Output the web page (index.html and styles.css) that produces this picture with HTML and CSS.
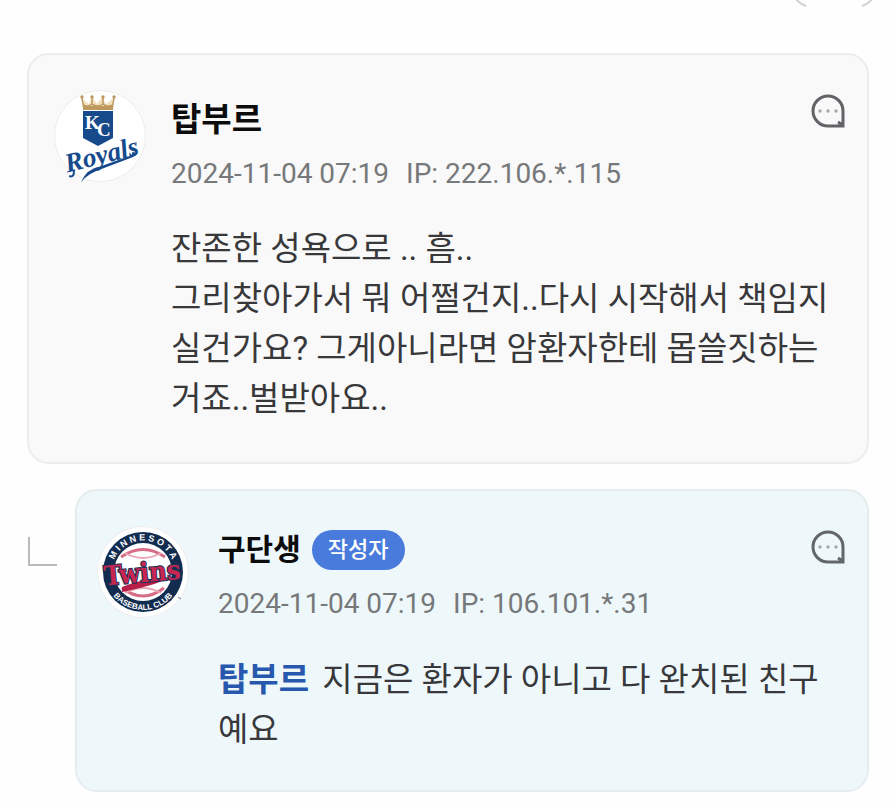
FILE: index.html
```html
<!DOCTYPE html>
<html lang="ko">
<head>
<meta charset="utf-8">
<meta name="viewport" content="width=device-width, initial-scale=1">
<title>댓글</title>
<link rel="stylesheet" href="styles.css">
</head>
<body>
<div class="topbar">
  <svg class="topbar-mark" width="82" height="8" viewBox="0 0 82 8" aria-hidden="true">
    <path d="M3-1Q7 4 13 6M69 6Q75 4 79-1" fill="none" stroke="#d2d2d2" stroke-width="2"/>
  </svg>
</div>
<main class="comments">
  <article class="comment">
    <svg class="avatar" viewBox="0 0 92 92" role="img" aria-label="Kansas City Royals">
      <circle cx="46" cy="46" r="45.5" fill="#fff" stroke="#ececec"/>
      <path d="M30 19 27 8 35 14 38 7 43 14 48 7 52 14 60 8 58 19Z" fill="#f1dfbd"/>
      <path d="M30 20 28 8M58 20 60 8M38 15V8M49 15V8M29 15Q34 18 38 14Q43 18 49 14Q54 18 59 15" fill="none" stroke="#bd985f" stroke-width="1.5"/>
      <path d="M29 16H59V20H29Z" fill="#bd985f"/>
      <g fill="#bd985f"><circle cx="28" cy="7" r="1.7"/><circle cx="38" cy="7" r="1.7"/><circle cx="49" cy="7" r="1.7"/><circle cx="60" cy="7" r="1.7"/></g>
      <path d="M29 21H59V48L44 56 29 48Z" fill="#174a8b"/>
      <text class="kc" x="31 43" y="39 46">KC</text>
      <g transform="rotate(-14 46 65)">
        <text class="royals" x="10" y="74">Royals</text>
        <path d="M78 70Q86 73 77 75L44 79Q29 80 21 87Q29 75 44 76L77 73" fill="#174a8b"/>
        <path d="M17 73Q16 81 11 78" fill="none" stroke="#174a8b" stroke-width="2"/>
      </g>
      <circle cx="82" cy="53" r="1" fill="#889bb2"/>
    </svg>
    <header class="info">
      <div class="name-row"><h2 class="name">탑부르</h2></div>
      <p class="meta"><time datetime="2024-11-04T07:19">2024-11-04 07:19</time><span>IP: 222.106.*.115</span></p>
    </header>
    <button class="reply-button" type="button" aria-label="답글">
      <svg width="34" height="34" viewBox="0 0 34 34" aria-hidden="true">
        <path d="M32 17A15 15 0 1 0 17 32H32V17M32 31 27 28" fill="none" stroke="#626366" stroke-width="3"/>
        <g fill="#a8a8a8"><circle cx="9" cy="17" r="1.7"/><circle cx="17" cy="17" r="1.7"/><circle cx="25" cy="17" r="1.7"/></g>
      </svg>
    </button>
    <p class="text">잔존한 성욕으로 .. 흠..<br>그리찾아가서 뭐 어쩔건지..다시 시작해서 책임지실건가요? 그게아니라면 암환자한테 몹쓸짓하는거죠..벌받아요..</p>
  </article>

  <div class="thread">
    <span class="branch"></span>
    <article class="comment reply">
      <svg class="avatar" viewBox="0 0 92 92" role="img" aria-label="Minnesota Twins">
        <defs>
          <path id="ring-top" d="M14.500 46A31.500 31.500 0 0 1 77.500 46"/>
          <path id="ring-bottom" d="M8 46A38 38 0 0 0 84 46"/>
          <clipPath id="ball"><circle cx="46" cy="46" r="28"/></clipPath>
        </defs>
        <circle cx="46" cy="46" r="45.5" fill="#fff" stroke="#eeecec"/>
        <circle cx="46" cy="46" r="40" fill="#122c50"/>
        <circle cx="46" cy="46" r="29" fill="#fff"/>
        <g clip-path="url(#ball)" fill="none" stroke="#d66c85" stroke-width="3">
          <path d="M24 31Q46 16 68 31M25 62Q46 78 67 62"/>
          <path d="M28 27Q46 37 64 27M28 67Q46 57 64 67" stroke="#e7a8b6" stroke-width="2"/>
        </g>
        <text class="ring"><textPath href="#ring-top" startOffset="50%">M I N N E S O T A</textPath></text>
        <text class="ring small"><textPath href="#ring-bottom" startOffset="50%">BASEBALL CLUB</textPath></text>
        <path d="M25 61Q46 52 68 52Q68 57 25 66Z" fill="#b71e48"/>
        <text class="twins" x="45" y="56" transform="rotate(-5 46 46)">Twins</text>
        <path d="M81 71 84 73" stroke="#788188"/>
      </svg>
      <header class="info">
        <div class="name-row"><h2 class="name">구단생</h2><span class="badge">작성자</span></div>
        <p class="meta"><time datetime="2024-11-04T07:19">2024-11-04 07:19</time><span>IP: 106.101.*.31</span></p>
      </header>
      <button class="reply-button" type="button" aria-label="답글">
        <svg width="34" height="34" viewBox="0 0 34 34" aria-hidden="true">
          <path d="M32 17A15 15 0 1 0 17 32H32V17M32 31 27 28" fill="none" stroke="#626669" stroke-width="3"/>
          <g fill="#a8a8a8"><circle cx="9" cy="17" r="1.7"/><circle cx="17" cy="17" r="1.7"/><circle cx="25" cy="17" r="1.7"/></g>
        </svg>
      </button>
      <p class="text"><a class="mention" href="#">탑부르</a> 지금은 환자가 아니고 다 완치된 친구예요</p>
    </article>
  </div>
</main>
</body>
</html>
```
FILE: styles.css
```css
* { box-sizing: border-box; }

body {
  margin: 0;
  background: #fefefe;
  color: #38383b;
  font-family: Roboto, "Noto Sans CJK KR", sans-serif;
}

h2, p { margin: 0; }

.topbar {
  display: flex;
  justify-content: flex-end;
  height: 53px;
  padding-right: 19px;
}

.topbar-mark { display: block; }

.comments {
  display: flex;
  flex-direction: column;
  gap: 25px;
  padding: 0 25px 12px 27px;
}

.comment {
  display: grid;
  grid-template-columns: 92px 1fr 34px;
  align-items: start;
  column-gap: 25px;
  row-gap: 32px;
  padding: 35px 22px 38px 25px;
  border: 2px solid #ececec;
  border-radius: 22px;
  background: #f9f9f9;
}

.avatar {
  display: block;
  width: 92px;
  height: 92px;
}

.info { padding-top: 10px; }

.name-row {
  display: flex;
  align-items: center;
  gap: 11px;
  height: 40px;
}

.name {
  color: #0c0c0d;
  font-size: 33px;
  font-weight: 700;
  line-height: 40px;
}

.meta {
  display: flex;
  gap: 17px;
  margin-top: 16px;
  color: #77787a;
  font-size: 28px;
  line-height: 36px;
  white-space: nowrap;
}

.reply-button {
  display: block;
  width: 34px;
  height: 34px;
  margin-top: 4px;
  padding: 0;
  border: 0;
  background: none;
}

.reply-button svg { display: block; }

.text {
  grid-column: 2 / -1;
  font-size: 33px;
  line-height: 50px;
}

.thread {
  display: flex;
  align-items: flex-start;
}

.branch {
  width: 29px;
  height: 29px;
  margin: 48px 18px 0 1px;
  border-bottom: 2px solid #bababa;
  border-left: 2px solid #bababa;
}

.reply {
  flex: 1;
  column-gap: 29px;
  row-gap: 33px;
  padding: 35px 22px 35px 20px;
  border-color: #e4ecee;
  background: #eef8fb;
}

.reply .info { padding-top: 4px; }
.reply .name { font-size: 30px; }

.badge {
  padding: 0 16px;
  border-radius: 20px;
  background: #487bdc;
  color: #fff;
  font-size: 22px;
  font-weight: 500;
  line-height: 40px;
}

.mention {
  margin-right: 5px;
  color: #2858ad;
  font-weight: 700;
  text-decoration: none;
}

.kc {
  fill: #fff;
  font: 700 19px "Liberation Serif", serif;
}

.royals {
  fill: #174a8b;
  font: italic 700 27px "Liberation Serif", serif;
}

.ring {
  fill: #fff;
  font: 700 9px "Liberation Sans", sans-serif;
  text-anchor: middle;
}

.ring.small { font-size: 8px; }

.twins {
  fill: #c62650;
  stroke: #183258;
  stroke-width: 2px;
  paint-order: stroke;
  font: 700 27px "DejaVu Serif Condensed", "DejaVu Serif", serif;
  text-anchor: middle;
}
```
